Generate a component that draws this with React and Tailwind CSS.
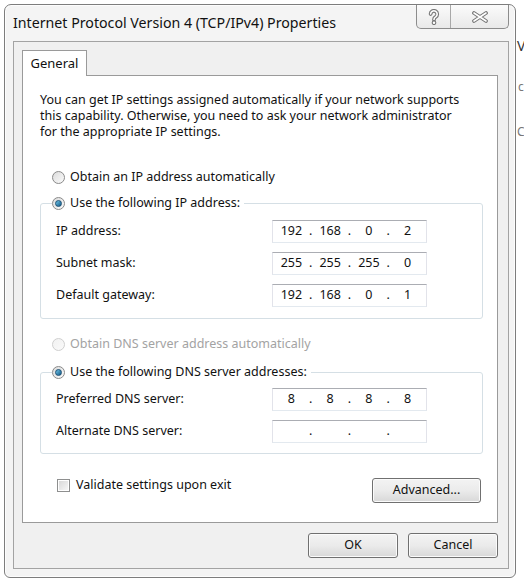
import { Fragment } from 'react';

const FONT = "font-['Noto_Sans','Open_Sans',sans-serif]";

function Radio({ checked = false, disabled = false }) {
  return (
    <span
      className={`flex h-[13px] w-[13px] shrink-0 items-center justify-center rounded-full border ${
        disabled
          ? 'border-[#cfcfcf] bg-linear-to-br from-[#f1f1f1] to-[#fafafa]'
          : 'border-[#8a8a8a] bg-linear-to-br from-[#dcdcdc] to-[#fbfbfb]'
      }`}
    >
      {checked && (
        <span className="h-[7px] w-[7px] rounded-full border border-[#1b4f74] bg-linear-to-br from-[#6fc6ea] to-[#0f5a86]" />
      )}
    </span>
  );
}

function Checkbox() {
  return (
    <span className="flex h-[13px] w-[13px] shrink-0 items-center justify-center border border-[#8e8f8f] bg-white">
      <span className="h-[9px] w-[9px] bg-linear-to-br from-[#d9d9d9] to-[#f6f6f6]" />
    </span>
  );
}

function IpBox({ parts = ['', '', '', ''] }) {
  return (
    <div className="flex h-[23px] w-[155px] items-center border border-[#e2e3ea] border-t-[#abadb3] border-b-[#e3e9ef] bg-white px-px text-[12.5px] text-[#111]">
      {parts.map((p, i) => (
        <Fragment key={i}>
          {i > 0 && <span className="flex w-[4px] justify-center">.</span>}
          <span className="flex-1 text-center">{p}</span>
        </Fragment>
      ))}
    </div>
  );
}

function Button({ children, className = '' }) {
  return (
    <div
      className={`flex h-[25px] items-center justify-center rounded-[3px] border border-[#707070] bg-linear-to-b from-[#f3f3f3] via-[#ebebeb] to-[#d8d8d8] text-[12.5px] text-[#111] shadow-[inset_0_0_0_1px_#fbfbfb] ${className}`}
    >
      {children}
    </div>
  );
}

function Row({ label, parts }) {
  return (
    <div className="flex h-[23px] items-center">
      <span className="w-[216px]">{label}</span>
      <IpBox parts={parts} />
    </div>
  );
}

function CaptionButtons() {
  return (
    <div className="mr-[6px] flex h-[24px] overflow-hidden rounded-b-[5px] border border-t-0 border-[#8c8c8c] bg-linear-to-b from-[#fbfbfb] to-[#e9e9e9]">
      <div className="flex w-[34px] items-center justify-center border-r border-[#a8a8a8]">
        <svg width="12" height="16" viewBox="0 0 12 16">
          <path d="M2.6 5 A3.3 3.3 0 1 1 7.7 7.9 C6.3 8.7 6 9.2 6 10.4" fill="none" stroke="#777" strokeWidth="3.8" strokeLinecap="round" />
          <path d="M2.6 5 A3.3 3.3 0 1 1 7.7 7.9 C6.3 8.7 6 9.2 6 10.4" fill="none" stroke="#ffffff" strokeWidth="1.6" strokeLinecap="round" />
          <circle cx="6" cy="13.7" r="1.8" fill="#ffffff" stroke="#777" strokeWidth="1.1" />
        </svg>
      </div>
      <div className="flex w-[57px] items-center justify-center">
        <svg width="18" height="12" viewBox="0 0 18 12">
          <path d="M3 2 L15 10 M15 2 L3 10" fill="none" stroke="#777" strokeWidth="3.8" strokeLinecap="round" />
          <path d="M3 2 L15 10 M15 2 L3 10" fill="none" stroke="#ffffff" strokeWidth="1.6" strokeLinecap="round" />
        </svg>
      </div>
    </div>
  );
}

export default function App() {
  return (
    <div className={`relative h-[582px] w-[524px] overflow-hidden bg-white pl-[4px] pt-[4px] ${FONT}`}>
      {/* bits of the window behind */}
      <span className="absolute left-[517px] top-[35px] text-[14px] text-[#333]">V</span>
      <span className="absolute left-[518px] top-[78px] text-[12px] text-[#777]">c</span>
      <span className="absolute left-[517px] top-[123px] text-[12px] text-[#777]">C</span>

      <div className="flex h-[574px] w-[512px] flex-col rounded-t-[7px] rounded-b-[6px] border border-[#7d7d7d] bg-[#f4f4f4] shadow-[inset_0_0_0_1px_#fdfdfd]">
        {/* title bar */}
        <div className="flex h-[36px] items-start justify-between">
          <div className="pl-[8px] pt-[8px] text-[14.2px] leading-[20px] text-[#111]">
            Internet Protocol Version 4 (TCP/IPv4) Properties
          </div>
          <CaptionButtons />
        </div>

        {/* client area */}
        <div className="ml-[8px] h-[528px] w-[496px] border border-[#a3a3a3] bg-[#f0f0f0] pl-[8px] pt-[8px] text-[12.5px] text-[#111]">
          <div className="relative z-10 -mb-px flex h-[26px] w-[65px] items-center justify-center border border-b-0 border-[#9a9a9a] bg-white text-[13px]">
            General
          </div>

          <div className="h-[448px] w-[476px] border border-[#9a9a9a] bg-white pl-[17px] pt-[16px]">
            <p className="leading-[16px]">
              You can get IP settings assigned automatically if your network supports
              <br />
              this capability. Otherwise, you need to ask your network administrator
              <br />
              for the appropriate IP settings.
            </p>

            <div className="mt-[27px] flex h-[20px] items-center gap-[5px] pl-[12px]">
              <Radio />
              <span>Obtain an IP address automatically</span>
            </div>

            <div className="mt-[16px] w-[443px] rounded-[3px] border border-[#d5dfe5] pb-[11px]">
              <div className="-mt-[11px] ml-[11px] flex h-[20px] w-fit items-center gap-[5px] bg-white pr-[4px]">
                <Radio checked />
                <span>Use the following IP address:</span>
              </div>
              <div className="mt-[7px] flex flex-col gap-[9px] pl-[15px]">
                <Row label="IP address:" parts={['192', '168', '0', '2']} />
                <Row label="Subnet mask:" parts={['255', '255', '255', '0']} />
                <Row label="Default gateway:" parts={['192', '168', '0', '1']} />
              </div>
            </div>

            <div className="mt-[15px] flex h-[20px] items-center gap-[5px] pl-[12px] text-[#a3a3a3]">
              <Radio disabled />
              <span>Obtain DNS server address automatically</span>
            </div>

            <div className="mt-[18px] w-[443px] rounded-[3px] border border-[#d5dfe5] pb-[10px]">
              <div className="-mt-[11px] ml-[11px] flex h-[20px] w-fit items-center gap-[5px] bg-white pr-[4px]">
                <Radio checked />
                <span>Use the following DNS server addresses:</span>
              </div>
              <div className="mt-[6px] flex flex-col gap-[9px] pl-[15px]">
                <Row label="Preferred DNS server:" parts={['8', '8', '8', '8']} />
                <Row label="Alternate DNS server:" parts={['', '', '', '']} />
              </div>
            </div>

            <div className="mt-[24px] flex w-[443px] items-start justify-between">
              <div className="ml-[17px] flex h-[14px] items-center gap-[6px]">
                <Checkbox />
                <span>Validate settings upon exit</span>
              </div>
              <Button className="mr-[2px] w-[109px]">Advanced...</Button>
            </div>
          </div>

          <div className="mt-[10px] flex w-[476px] justify-end gap-[10px]">
            <Button className="w-[90px]">OK</Button>
            <Button className="w-[90px]">Cancel</Button>
          </div>
        </div>
      </div>
    </div>
  );
}
